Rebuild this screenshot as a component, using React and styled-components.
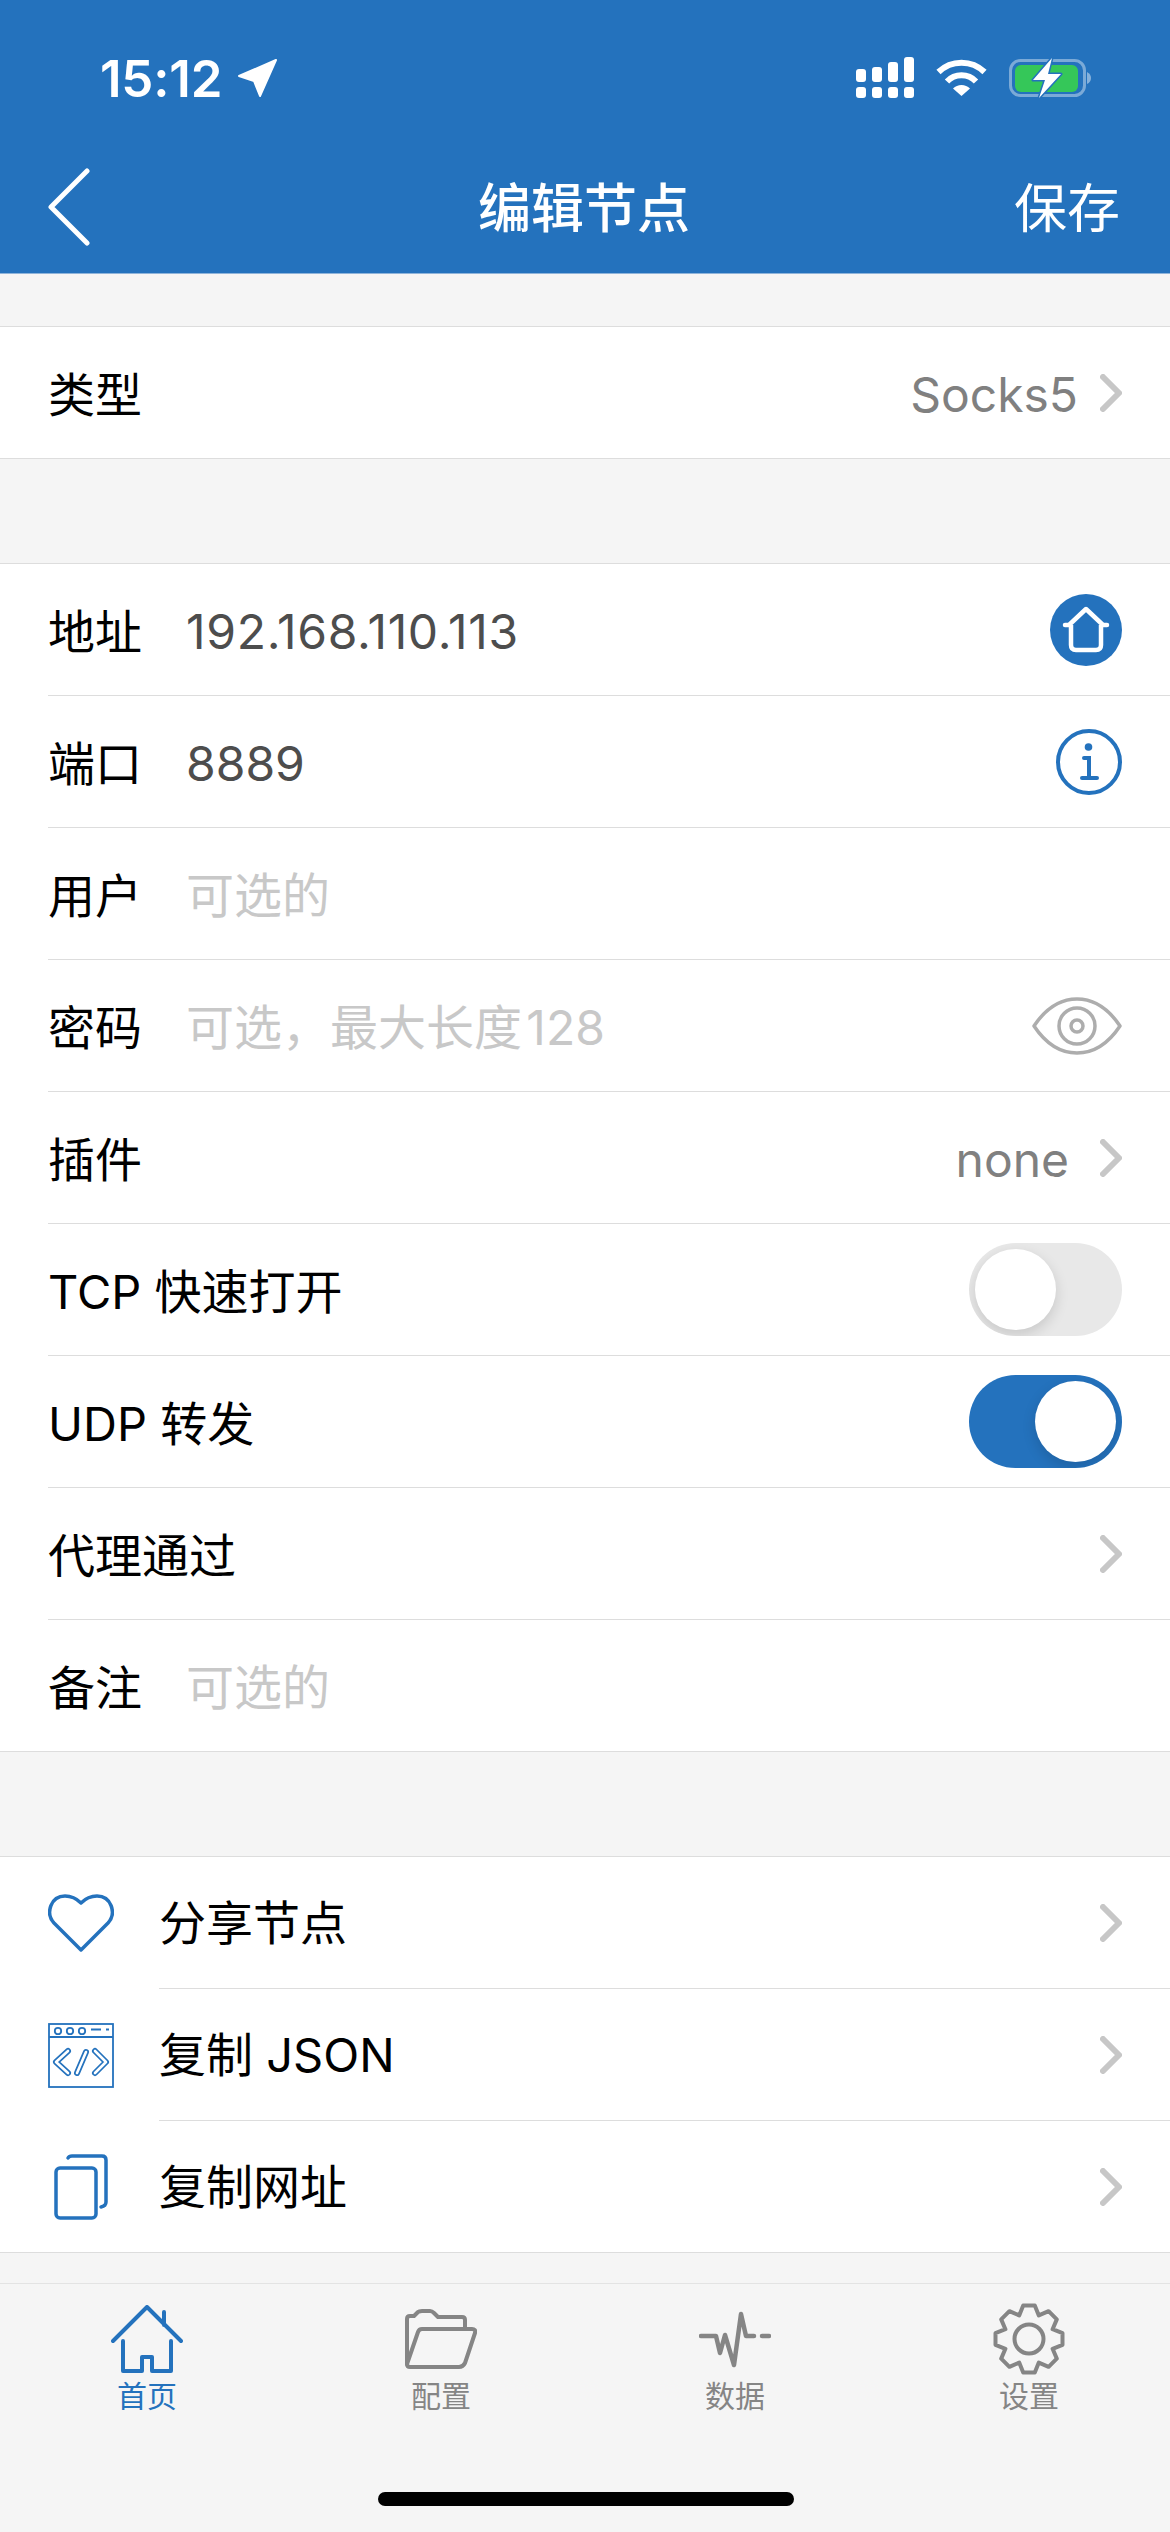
import React from "react";
import styled, { createGlobalStyle } from "styled-components";

const BLUE = "#2472bd";
const GREY = "#858585";

const Global = createGlobalStyle`
  html, body { margin: 0; padding: 0; background: #f5f5f5; }
  body { font-family: Inter, "Noto Sans CJK SC", sans-serif; -webkit-font-smoothing: antialiased; }
  * { box-sizing: border-box; }
`;

const Page = styled.div`
  width: 1170px;
  height: 2532px;
  display: flex;
  flex-direction: column;
  overflow: hidden;
  background: #f5f5f5;
`;

const Header = styled.header`
  height: 274px;
  flex: none;
  background: ${BLUE};
  border-bottom: 1px solid #8fb4da;
  display: flex;
  flex-direction: column;
  padding-top: 57px;
  color: #fff;
`;

const StatusBar = styled.div`
  height: 41px;
  display: flex;
  align-items: center;
  justify-content: space-between;
  padding: 0 78px 0 100px;
`;

const TimeGroup = styled.div`
  display: flex;
  align-items: center;
  gap: 15px;
`;

const Time = styled.span`
  font-size: 51px;
  font-weight: 600;
  letter-spacing: -0.2px;
  line-height: 41px;
  padding-top: 2px;
`;

const StatusIcons = styled.div`
  display: flex;
  align-items: center;
  gap: 22px;
`;

const Nav = styled.div`
  margin-top: 59px;
  height: 100px;
  display: grid;
  grid-template-columns: 1fr auto 1fr;
  align-items: center;
  padding: 0 50px 0 48px;
`;

const Title = styled.h1`
  margin: 0;
  padding-top: 4px;
  font-size: 53px;
  font-weight: 500;
  line-height: 60px;
`;

const Save = styled.span`
  justify-self: end;
  padding-top: 4px;
  font-size: 53px;
  font-weight: 400;
  line-height: 60px;
`;

const Content = styled.main`
  flex: 1;
  padding-top: 52px;
  display: flex;
  flex-direction: column;
  gap: 104px;
`;

const Group = styled.section`
  background: #fff;
  border-top: 1px solid #ddd;
  border-bottom: 1px solid #ddd;
`;

const Row = styled.div`
  height: 132px;
  display: flex;
  padding-left: 48px;
  &:last-child { height: 131px; }
  &:last-child > div { border-bottom: 0; }
`;

const RowBody = styled.div`
  flex: 1;
  min-width: 0;
  display: flex;
  align-items: center;
  border-bottom: 1px solid #ddd;
  padding-right: 48px;
`;

const Label = styled.span`
  font-size: 47px;
  line-height: 60px;
  padding-top: 4px;
  color: #000;
  white-space: nowrap;
  width: ${(p) => (p.$fixed ? "138px" : "auto")};
  flex: none;
`;

const ActionLabel = styled(Label)`
  padding-top: 0;
`;

const Value = styled.span`
  flex: 1;
  font-size: 48px;
  line-height: 60px;
  padding-top: 5px;
  white-space: nowrap;
  letter-spacing: ${(p) => p.$tracking || 0}px;
  color: ${(p) => (p.$placeholder ? "#c8c8c8" : "#4d4d4d")};
`;

const Spacer = styled.span`
  flex: 1;
`;

const Detail = styled.span`
  font-size: 48px;
  line-height: 60px;
  padding-top: 4px;
  color: #808080;
  margin-right: ${(p) => p.$gap}px;
`;

const IconCell = styled.span`
  width: 111px;
  flex: none;
  display: flex;
  align-items: center;
  justify-content: ${(p) => (p.$indent ? "center" : "flex-start")};
  padding-right: ${(p) => (p.$indent ? 45 : 0)}px;
`;

const ActionRow = styled(Row)`
  align-items: center;
`;

const ActionBody = styled(RowBody)`
  align-self: stretch;
`;

const Track = styled.span`
  width: 153px;
  height: 93px;
  border-radius: 47px;
  background: ${(p) => (p.$on ? BLUE : "#e8e8e8")};
  display: flex;
  align-items: center;
  justify-content: ${(p) => (p.$on ? "flex-end" : "flex-start")};
  padding: 0 6px;
  overflow: hidden;
`;

const Knob = styled.span`
  width: 81px;
  height: 81px;
  border-radius: 50%;
  background: #fff;
  box-shadow: 0 5px 14px rgba(0, 0, 0, 0.14);
`;

const TabBar = styled.nav`
  height: 249px;
  flex: none;
  border-top: 1px solid #e3e3e3;
  background: #f5f5f5;
  display: flex;
  flex-direction: column;
  align-items: flex-start;
`;

const Tabs = styled.div`
  display: grid;
  grid-template-columns: repeat(4, 294px);
`;

const Tab = styled.div`
  padding-top: 18px;
  display: flex;
  flex-direction: column;
  align-items: center;
  color: ${(p) => (p.$active ? BLUE : GREY)};
`;

const TabIcon = styled.div`
  height: 74px;
  flex: none;
  display: flex;
  align-items: center;
  justify-content: center;
`;

const TabLabel = styled.span`
  font-size: 30px;
  line-height: 36px;
  margin-top: 2px;
  flex: none;
`;

const HomeIndicator = styled.div`
  width: 416px;
  height: 14px;
  border-radius: 7px;
  background: #000;
  margin: auto 0 26px 378px;
`;

const Signal = () => (
  <svg width="58" height="41" viewBox="0 0 58 41" fill="#fff">
    <rect x="0" y="12" width="10" height="13" rx="3" />
    <rect x="16" y="10" width="10" height="15" rx="3" />
    <rect x="32" y="5" width="10" height="20" rx="3" />
    <rect x="48" y="0" width="10" height="25" rx="3" />
    <rect x="0" y="30" width="10" height="11" rx="3" />
    <rect x="16" y="30" width="10" height="11" rx="3" />
    <rect x="32" y="30" width="10" height="11" rx="3" />
    <rect x="48" y="30" width="10" height="11" rx="3" />
  </svg>
);

const Wifi = () => (
  <svg width="51" height="37" viewBox="0 0 51 37" fill="none">
    <path d="M2.5 13 A33 33 0 0 1 48.5 13" stroke="#fff" strokeWidth="6" />
    <path d="M11 22.5 A20 20 0 0 1 40 22.5" stroke="#fff" strokeWidth="6" />
    <path d="M17 29.5 A12 12 0 0 1 34 29.5 L25.5 37 Z" fill="#fff" />
  </svg>
);

const Battery = () => (
  <svg width="83" height="40" viewBox="0 0 83 40" fill="none">
    <rect x="1.5" y="2.5" width="74" height="35" rx="10" stroke="#fff" strokeOpacity="0.4" strokeWidth="3" />
    <rect x="6" y="7" width="63" height="27" rx="6" fill="#35c759" />
    <path d="M78 14 Q82 16 82 20 Q82 24 78 26 Z" fill="#fff" fillOpacity="0.45" />
    <path d="M43 0 L24 22 H36 L30 40 L52 16 H39 Z" fill="#fff" stroke={BLUE} strokeWidth="3" strokeLinejoin="round" paintOrder="stroke" />
  </svg>
);

const LocationArrow = () => (
  <svg width="41" height="38" viewBox="0 0 41 38" fill="#fff" stroke="#fff" strokeWidth="2" strokeLinejoin="round">
    <path d="M2 17 L39 1 L23 37 L17 22 Z" />
  </svg>
);

const Back = () => (
  <svg width="44" height="78" viewBox="0 0 44 78" fill="none" stroke="#fff" strokeWidth="5" strokeLinecap="round" strokeLinejoin="round">
    <path d="M39 3 L3 39 L39 75" />
  </svg>
);

const Chevron = () => (
  <svg width="22" height="38" viewBox="0 0 22 38" fill="none" stroke="#c7c7c7" strokeWidth="6" strokeLinecap="round" strokeLinejoin="round">
    <path d="M3 3 L19 19 L3 35" />
  </svg>
);

const HomeBadge = () => (
  <svg width="72" height="72" viewBox="0 0 72 72" fill="none">
    <circle cx="36" cy="36" r="36" fill={BLUE} />
    <path d="M15 31 H19 L36 15 L53 31 H57" stroke="#fff" strokeWidth="4.500" strokeLinejoin="round" strokeLinecap="round" />
    <path d="M21 31 V51 Q21 56 26 56 H46 Q51 56 51 51 V31" stroke="#fff" strokeWidth="4.500" />
  </svg>
);

const Info = () => (
  <svg width="66" height="66" viewBox="0 0 66 66" fill="none" stroke={BLUE}>
    <circle cx="33" cy="33" r="31" strokeWidth="4" />
    <circle cx="32.500" cy="18" r="3.800" fill={BLUE} stroke="none" />
    <path d="M28 29 H33 V49 M26 49 H41" strokeWidth="4" strokeLinecap="round" />
  </svg>
);

const Eye = () => (
  <svg width="90" height="58" viewBox="0 0 90 58" fill="none" stroke="#adadad" strokeWidth="3.500">
    <path d="M2 29 C14 11 28 2 45 2 C62 2 76 11 88 29 C76 47 62 56 45 56 C28 56 14 47 2 29 Z" strokeLinejoin="round" />
    <circle cx="45" cy="29" r="18" />
    <circle cx="45" cy="29" r="6" />
  </svg>
);

const Heart = () => (
  <svg width="66" height="58" viewBox="0 0 66 58" fill="none" stroke={BLUE} strokeWidth="3.500" strokeLinejoin="round">
    <path d="M33 56 L6 29 C-3 19 3 2 17 2 C24 2 29 5 33 9 C37 5 42 2 49 2 C63 2 69 19 60 29 Z" />
  </svg>
);

const CodeWindow = () => (
  <svg width="66" height="65" viewBox="0 0 66 65" fill="none" stroke={BLUE} strokeWidth="1.800">
    <rect x="1" y="1" width="64" height="63" />
    <path d="M1 14 H65" />
    <circle cx="10" cy="8" r="3.200" />
    <circle cx="22" cy="8" r="3.200" />
    <circle cx="34" cy="8" r="3.200" />
    <path d="M43 6.500 H53 M58 6.500 H61" />
    <g strokeLinecap="round" strokeLinejoin="round" strokeWidth="6">
      <path d="M20 28 L8 39 L20 50" />
      <path d="M29 50 L38 29" />
      <path d="M47 28 L58 39 L47 50" />
    </g>
    <g stroke="#fff" strokeLinecap="round" strokeLinejoin="round" strokeWidth="2.600">
      <path d="M20 28 L8 39 L20 50" />
      <path d="M29 50 L38 29" />
      <path d="M47 28 L58 39 L47 50" />
    </g>
  </svg>
);

const Copy = () => (
  <svg width="54" height="66" viewBox="0 0 54 66" fill="none" stroke={BLUE} strokeWidth="3.500" strokeLinecap="round">
    <rect x="2" y="14" width="40" height="50" rx="4" />
    <path d="M14 4 Q15 2 18 2 H48 Q52 2 52 6 V48 Q52 52 47 53" />
  </svg>
);

const TabHome = () => (
  <svg width="72" height="68" viewBox="0 0 72 68" fill="none" stroke="currentColor" strokeWidth="4" strokeLinecap="round" strokeLinejoin="round">
    <path d="M2 36 L36 2 L70 36 M53 7 V20" />
    <path d="M12 36 V66 H31 V52 H41 V66 H60 V36" />
  </svg>
);

const TabFolder = () => (
  <svg width="72" height="60" viewBox="0 0 72 60" fill="none" stroke="currentColor" strokeWidth="4" strokeLinecap="round" strokeLinejoin="round">
    <path d="M2 55 V10 Q2 7 5 7 H9 L13 3 Q14 2 17 2 H25 Q27 2 29 4 L33 8 H57 Q60 8 60 11 V19" />
    <path d="M2 55 L13 23 Q14 20 17 20 H67 Q71 20 70 24 L60 54 Q58 58 54 58 H5 Q2 58 2 55 Z" />
  </svg>
);

const TabPulse = () => (
  <svg width="72" height="57" viewBox="0 0 72 57" fill="none" stroke="currentColor" strokeWidth="4.500" strokeLinecap="round" strokeLinejoin="round">
    <path d="M2 25 H17 L21 42 L26 24 L35 54 L42 3 L47 25 H55 M63 25 H70" />
  </svg>
);

const gearPath = (() => {
  const cx = 36, cy = 36, outer = 34, root = 25.5, n = 8;
  const pts = [];
  for (let i = 0; i < n; i++) {
    const a = (i / n) * Math.PI * 2 - Math.PI / 2;
    const s = (Math.PI * 2) / n;
    [[-0.5, root], [-0.22, outer], [0.22, outer], [0.5, root]].forEach(([k, r]) => {
      const t = a + k * s;
      pts.push(`${(cx + r * Math.cos(t)).toFixed(1)} ${(cy + r * Math.sin(t)).toFixed(1)}`);
    });
  }
  return `M${pts.join(" L")} Z`;
})();

const TabGear = () => (
  <svg width="72" height="72" viewBox="0 0 72 72" fill="none" stroke="currentColor" strokeWidth="4" strokeLinejoin="round">
    <path d={gearPath} />
    <circle cx="36" cy="36" r="14.500" />
  </svg>
);

const Field = ({ label, value, placeholder, tracking, children }) => (
  <Row>
    <RowBody>
      <Label $fixed>{label}</Label>
      <Value $placeholder={placeholder} $tracking={tracking}>{value}</Value>
      {children}
    </RowBody>
  </Row>
);

const Link = ({ label, detail, gap }) => (
  <Row>
    <RowBody>
      <Label>{label}</Label>
      <Spacer />
      {detail && <Detail $gap={gap}>{detail}</Detail>}
      <Chevron />
    </RowBody>
  </Row>
);

const Toggle = ({ label, on }) => (
  <Row>
    <RowBody>
      <Label>{label}</Label>
      <Spacer />
      <Track $on={on}>
        <Knob />
      </Track>
    </RowBody>
  </Row>
);

const Action = ({ icon, label, indent }) => (
  <ActionRow>
    <IconCell $indent={indent}>{icon}</IconCell>
    <ActionBody>
      <ActionLabel>{label}</ActionLabel>
      <Spacer />
      <Chevron />
    </ActionBody>
  </ActionRow>
);

export default function App() {
  return (
    <Page>
      <Global />
      <Header>
        <StatusBar>
          <TimeGroup>
            <Time>15:12</Time>
            <LocationArrow />
          </TimeGroup>
          <StatusIcons>
            <Signal />
            <Wifi />
            <Battery />
          </StatusIcons>
        </StatusBar>
        <Nav>
          <Back />
          <Title>编辑节点</Title>
          <Save>保存</Save>
        </Nav>
      </Header>
      <Content>
        <Group>
          <Link label="类型" detail="Socks5" gap={22} />
        </Group>
        <Group>
          <Field label="地址" value="192.168.110.113" tracking={0.7}><HomeBadge /></Field>
          <Field label="端口" value="8889"><Info /></Field>
          <Field label="用户" value="可选的" placeholder />
          <Field label="密码" value={"可选，最大长度\u200a128"} placeholder><Eye /></Field>
          <Link label="插件" detail="none" gap={31} />
          <Toggle label="TCP 快速打开" />
          <Toggle label="UDP 转发" on />
          <Link label="代理通过" />
          <Field label="备注" value="可选的" placeholder />
        </Group>
        <Group>
          <Action icon={<Heart />} label="分享节点" />
          <Action icon={<CodeWindow />} label="复制 JSON" />
          <Action icon={<Copy />} label="复制网址" indent />
        </Group>
      </Content>
      <TabBar>
        <Tabs>
          <Tab $active>
            <TabIcon><TabHome /></TabIcon>
            <TabLabel>首页</TabLabel>
          </Tab>
          <Tab>
            <TabIcon><TabFolder /></TabIcon>
            <TabLabel>配置</TabLabel>
          </Tab>
          <Tab>
            <TabIcon><TabPulse /></TabIcon>
            <TabLabel>数据</TabLabel>
          </Tab>
          <Tab>
            <TabIcon><TabGear /></TabIcon>
            <TabLabel>设置</TabLabel>
          </Tab>
        </Tabs>
        <HomeIndicator />
      </TabBar>
    </Page>
  );
}
